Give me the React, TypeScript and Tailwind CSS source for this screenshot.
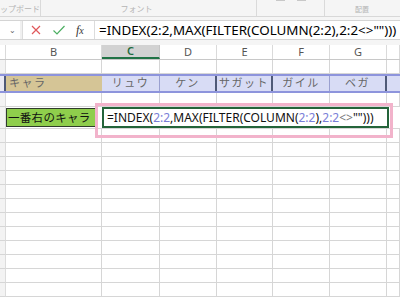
import React from "react";

// Column widths in px: row header, B, C, D, E, F, G, H (rest)
const COLS = [6, 96, 58, 57, 56, 57, 57, 13];
const LETTERS = ["", "B", "C", "D", "E", "F", "G", ""];
const NAMES = ["リュウ", "ケン", "サガット", "ガイル", "ベガ"];

const font = { fontFamily: '"Noto Sans", "Noto Sans CJK JP", sans-serif' };

function GridRow({ h }: { h: string }) {
  return (
    <div className={`flex ${h} shrink-0`}>
      {COLS.map((w, i) => (
        <div
          key={i}
          style={{ width: w }}
          className={`shrink-0 border-b border-[#d6d6d6] ${i === 0 ? "border-r border-r-[#dcdcdc] bg-[#f3f3f3]" : "border-r border-r-[#d6d6d6]"}`}
        />
      ))}
    </div>
  );
}

export default function App() {
  return (
    <div className="relative h-[302px] w-[400px] overflow-hidden bg-white" style={font}>
      {/* ribbon tail */}
      <div className="relative flex h-[17px] border-b border-[#d8d8d8] bg-[#f5f5f5] text-[8px] text-[#b4b4b4]">
        <div className="flex w-[41px] items-end border-r border-[#dadada] pb-[1px]">ップボード</div>
        <div className="flex w-[216px] items-end justify-center border-r border-[#dadada] pb-[1px] pr-[24px]">フォント</div>
        <div className="flex w-[68px] items-start justify-center gap-3 border-r border-[#dadada] pt-0">
          <span className="block h-[1px] w-[9px] bg-[#c8c8c8]" />
          <span className="block h-[1px] w-[9px] bg-[#c8c8c8]" />
        </div>
        <div className="flex flex-1 items-end pb-[1px] pl-[30px] text-[7px]">配置</div>
      </div>
      <div className="h-[3px] bg-[#f5f5f5]" />

      {/* formula bar */}
      <div className="flex h-[20px] border-y border-[#d4d4d4] bg-white">
        <div className="flex w-[20px] items-center justify-end pr-[4px] text-[8px] text-[#666]">⌄</div>
        <div className="w-[2px] bg-[#f0f0f0]" />
        <div className="flex w-[73px] items-center border-x border-[#dcdcdc]">
          <svg width="12" height="12" viewBox="0 0 12 12" className="ml-[7px]">
            <path d="M2 2 L10 10 M10 2 L2 10" stroke="#e0575b" strokeWidth="1.2" fill="none" />
          </svg>
          <svg width="14" height="12" viewBox="0 0 14 12" className="ml-[10px]">
            <path d="M1.5 6.5 L5 10 L12.5 2" stroke="#4caf62" strokeWidth="1.2" fill="none" />
          </svg>
          <span className="ml-[10px] text-[12px] italic text-[#333]" style={{ fontFamily: '"Liberation Serif", serif' }}>
            f<span className="text-[10px]">x</span>
          </span>
        </div>
        <div className="flex flex-1 items-center whitespace-nowrap pl-[4px] text-[13.4px] text-black">
          =INDEX(2:2,MAX(FILTER(COLUMN(2:2),2:2&lt;&gt;"")))
        </div>
      </div>
      <div className="h-[5px] bg-[#f5f5f5]" />

      {/* column header */}
      <div className="flex h-[15px] border-b border-[#c8c8c8] text-[11px] text-[#555]">
        {COLS.map((w, i) => (
          <div
            key={i}
            style={{ width: w }}
            className={`flex shrink-0 items-center justify-center border-r ${
              i === 2
                ? "border-b-2 border-r-[#c6c6c6] border-b-[#217346] bg-[#d2d2d2] font-semibold text-[#1e6b3e]"
                : "border-[#dadada] bg-white"
            }`}
          >
            {LETTERS[i]}
          </div>
        ))}
      </div>

      {/* row 1 */}
      <GridRow h="h-[14px]" />

      {/* row 2: names */}
      <div className="flex h-[19px] border-y-2 border-[#8d94dc] bg-[#d8dcf5] text-[11px] tracking-[1.5px] text-[#666]">
        <div className="w-[6px] shrink-0 border-r-2 border-[#4f5a78] bg-[#eaeaf4]" />
        <div className="flex w-[96px] shrink-0 items-center bg-[#d5c596] pl-[3px]">キャラ</div>
        {NAMES.map((n, i) => (
          <div
            key={n}
            style={{ width: COLS[i + 2] }}
            className={`flex shrink-0 items-center justify-center ${i === 0 || i === 3 ? "border-r border-[#9aa0d0]" : "border-r-2 border-[#4f5a78]"}`}
          >
            {n}
          </div>
        ))}
        <div className="flex-1" />
      </div>

      {/* row 3 */}
      <GridRow h="h-[14px]" />

      {/* row 4: label + formula */}
      <div className="flex h-[22px] border-b border-[#d6d6d6]">
        <div className="w-[6px] shrink-0 border-r border-[#dcdcdc] bg-[#f3f3f3]" />
        <div className="w-[96px] shrink-0 py-[1px] pr-[5px]">
          <div className="flex h-full items-center overflow-hidden whitespace-nowrap border border-[#2f3b2c] bg-[#8fce4c] pl-[1px] text-[11.5px] tracking-[0.3px] text-[#111]">
            一番右のキャラ
          </div>
        </div>
        <div className="w-[287px] shrink-0">
          <div className="flex h-full items-center whitespace-nowrap border-2 border-[#24643a] bg-white pl-[3px] text-[12px] text-[#111]">
            =INDEX(<span className="text-[#7a7ed8]">2:2</span>,MAX(FILTER(COLUMN(<span className="text-[#7a7ed8]">2:2</span>),<span className="text-[#7a7ed8]">2:2</span><span className="text-[#777]">&lt;&gt;</span>"")))
          </div>
        </div>
        <div className="flex-1" />
      </div>

      {Array.from({ length: 12 }).map((_, i) => (
        <GridRow key={i} h="h-[14px]" />
      ))}

      {/* pink highlight box */}
      <div className="pointer-events-none absolute left-[95px] top-[103px] h-[35px] w-[298px] border-[3px] border-[#f2b3cb]" />
    </div>
  );
}
